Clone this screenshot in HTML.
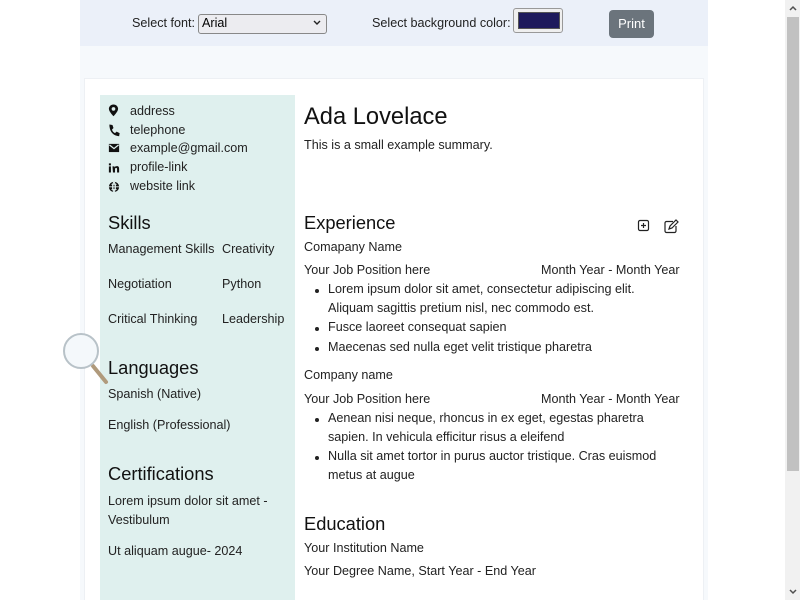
<!DOCTYPE html>
<html><head><style>
html,body{margin:0;width:800px;height:600px;overflow:hidden}
body{background:#fff;font-family:"Liberation Sans",Arial,sans-serif;color:#222;position:relative}
.a{position:absolute;white-space:nowrap}
.t{font-size:12.6px;margin-top:1px}
.h{font-size:18.3px;color:#111}
.b::before{content:"";position:absolute;left:-13px;top:7px;width:4px;height:4px;border-radius:50%;background:#222}
</style></head><body>
<div class="a" style="left:80px;top:0;width:628px;height:600px;background:#f6f9fc"></div>
<div class="a" style="left:80px;top:0;width:628px;height:46px;background:#ebf0f9"></div>
<div class="a t" style="left:132px;top:15px">Select font:</div>
<div class="a" style="left:198px;top:14px;width:127px;height:18px;border:1px solid #888;border-radius:3px;background:#ececf0"></div>
<div class="a t" style="left:202px;top:15px;color:#000">Arial</div>
<svg class="a" style="left:313px;top:20px" width="8" height="6"><path d="M1 1L4 4L7 1" stroke="#222" stroke-width="1.4" fill="none"/></svg>
<div class="a t" style="left:372px;top:15px">Select background color:</div>
<div class="a" style="left:513px;top:8px;width:48px;height:23px;border:1px solid #999;border-radius:3px;background:#efefef"></div>
<div class="a" style="left:518px;top:12px;width:40px;height:15px;background:#1e1a5c;border:1px solid #555"></div>
<div class="a" style="left:609px;top:10px;width:45px;height:28px;border-radius:4px;background:#6b747c;color:#fff;font-size:13px;text-align:center;line-height:27px">Print</div>
<div class="a" style="left:84px;top:78px;width:618px;height:530px;background:#fff;border:1px solid #edf0f4"></div>
<div class="a" style="left:100px;top:95px;width:195px;height:505px;background:#dff0ee"></div>
<svg class="a" style="left:107px;top:104px" width="14" height="90" viewBox="0 0 12 88">
<path d="M5.5 0.5C2.8 0.5 1 2.5 1 4.8C1 7.5 5.5 12 5.5 12S10 7.5 10 4.8C10 2.5 8.2 0.5 5.5 0.5ZM5.5 3A1.8 1.8 0 1 1 5.5 6.6A1.8 1.8 0 1 1 5.5 3Z" fill="#111" fill-rule="evenodd"/>
<path d="M1.5 20C1.5 27 5 31 11 31.5L11.5 28.5L8.5 27L7 28.5C5.5 27.8 4.5 26.5 4 25L5.5 23.5L4.5 20.5Z" fill="#111"/>
<path d="M1 39h10v8H1z" fill="#111"/><path d="M1.5 40L6 43.6L10.5 40" stroke="#dff0ee" stroke-width="1.2" fill="none"/>
<path d="M1 61h2v6H1zM1 58h2v2H1zM4.5 61h2v1c.5-.8 1.3-1.2 2.3-1.2 1.7 0 2.2 1 2.2 2.6V67h-2v-3.2c0-.8-.2-1.3-.9-1.3s-1.1.5-1.1 1.3V67h-2z" fill="#111"/>
<circle cx="6" cy="81" r="5" fill="#111"/><path d="M1 81h10M6 76v10M3.5 78.5h5M3.5 83.5h5M6 76c-2 2-2 8 0 10M6 76c2 2 2 8 0 10" stroke="#dff0ee" stroke-width=".9" fill="none"/>
</svg>
<div class="a t" style="left:130px;top:103px">address</div>
<div class="a t" style="left:130px;top:122px">telephone</div>
<div class="a t" style="left:130px;top:140px">example@gmail.com</div>
<div class="a t" style="left:130px;top:159px">profile-link</div>
<div class="a t" style="left:130px;top:178px">website link</div>
<div class="a h" style="left:108px;top:212px">Skills</div>
<div class="a t" style="left:108px;top:241px">Management Skills</div><div class="a t" style="left:222px;top:241px">Creativity</div>
<div class="a t" style="left:108px;top:276px">Negotiation</div><div class="a t" style="left:222px;top:276px">Python</div>
<div class="a t" style="left:108px;top:311px">Critical Thinking</div><div class="a t" style="left:222px;top:311px">Leadership</div>
<div class="a h" style="left:108px;top:357px">Languages</div>
<div class="a t" style="left:108px;top:386px">Spanish (Native)</div>
<div class="a t" style="left:108px;top:417px">English (Professional)</div>
<div class="a h" style="left:108px;top:463px">Certifications</div>
<div class="a t" style="left:108px;top:493px">Lorem ipsum dolor sit amet -</div>
<div class="a t" style="left:108px;top:512px">Vestibulum</div>
<div class="a t" style="left:108px;top:543px">Ut aliquam augue- 2024</div>
<svg class="a" style="left:60px;top:330px" width="50" height="55"><path d="M33 36L46 52" stroke="#b09a7c" stroke-width="4" stroke-linecap="round"/><circle cx="21" cy="21" r="17" fill="#f4f8fb" stroke="#b8c2c8" stroke-width="2"/></svg>
<div class="a" style="left:304px;top:104px;font-size:23.7px;color:#111">Ada Lovelace</div>
<div class="a t" style="left:304px;top:137px">This is a small example summary.</div>
<div class="a h" style="left:304px;top:212px">Experience</div>
<svg class="a" style="left:637px;top:218px" width="44" height="16"><rect x="1.5" y="2.5" width="10" height="10" rx="1.5" fill="none" stroke="#222" stroke-width="1.2"/><path d="M6.5 5v5M4 7.5h5" stroke="#222" stroke-width="1.2"/><path d="M36 3.5H29.5a1.5 1.5 0 0 0-1.5 1.5v8a1.5 1.5 0 0 0 1.5 1.5h8a1.5 1.5 0 0 0 1.5-1.5V8" fill="none" stroke="#222" stroke-width="1.2"/><path d="M32 11l1-3 6-6 2 2-6 6z" fill="none" stroke="#222" stroke-width="1.2"/></svg>
<div class="a t" style="left:304px;top:239px">Comapany Name</div>
<div class="a t" style="left:304px;top:262px">Your Job Position here</div><div class="a t" style="left:541px;top:262px">Month Year - Month Year</div>
<div class="a t b" style="left:328px;top:281px">Lorem ipsum dolor sit amet, consectetur adipiscing elit.</div>
<div class="a t" style="left:328px;top:300px">Aliquam sagittis pretium nisl, nec commodo est.</div>
<div class="a t b" style="left:328px;top:319px">Fusce laoreet consequat sapien</div>
<div class="a t b" style="left:328px;top:339px">Maecenas sed nulla eget velit tristique pharetra</div>
<div class="a t" style="left:304px;top:367px">Company name</div>
<div class="a t" style="left:304px;top:391px">Your Job Position here</div><div class="a t" style="left:541px;top:391px">Month Year - Month Year</div>
<div class="a t b" style="left:328px;top:410px">Aenean nisi neque, rhoncus in ex eget, egestas pharetra</div>
<div class="a t" style="left:328px;top:429px">sapien. In vehicula efficitur risus a eleifend</div>
<div class="a t b" style="left:328px;top:448px">Nulla sit amet tortor in purus auctor tristique. Cras euismod</div>
<div class="a t" style="left:328px;top:467px">metus at augue</div>
<div class="a h" style="left:304px;top:513px">Education</div>
<div class="a t" style="left:304px;top:540px">Your Institution Name</div>
<div class="a t" style="left:304px;top:563px">Your Degree Name, Start Year - End Year</div>
<div class="a" style="left:785px;top:0;width:15px;height:600px;background:#f1f1f1"></div>
<div class="a" style="left:787px;top:17px;width:12px;height:454px;background:#c1c1c1"></div>
<svg class="a" style="left:788px;top:4px" width="10" height="8"><path d="M2 6L5 3L8 6" stroke="#505050" stroke-width="1.5" fill="none"/></svg>
<svg class="a" style="left:788px;top:588px" width="10" height="8"><path d="M2 2L5 5L8 2" stroke="#505050" stroke-width="1.5" fill="none"/></svg>
</body></html>
